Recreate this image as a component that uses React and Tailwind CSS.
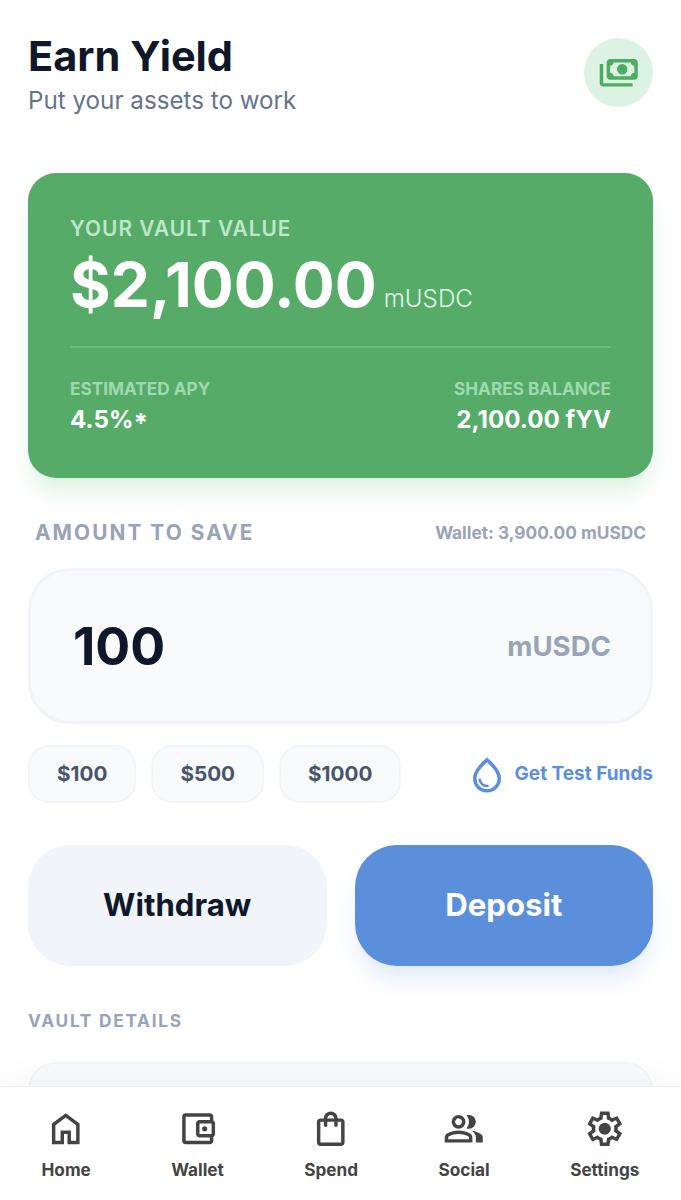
import { useState } from "react";
import { MdOutlineAccountBalanceWallet, MdOutlineShoppingBag } from "react-icons/md";

const Icon = ({ className, children }) => (
  <svg viewBox="0 0 24 24" fill="currentColor" className={className}>
    {children}
  </svg>
);

const PaymentsIcon = ({ className }) => (
  <Icon className={className}>
    <path d="M14 13q-1.25 0-2.125-.875T11 10t.875-2.125T14 7t2.125.875T17 10t-.875 2.125T14 13Zm-7 3q-.825 0-1.412-.587T5 14V6q0-.825.588-1.412T7 4h14q.825 0 1.413.588T23 6v8q0 .825-.587 1.413T21 16H7Zm2-2h10q0-.825.588-1.412T21 12V8q-.825 0-1.412-.587T19 6H9q0 .825-.587 1.413T7 8v4q.825 0 1.413.588T9 14Zm11 6H3q-.825 0-1.412-.587T1 18V7h2v11h17v2Z" />
  </Icon>
);

const DropIcon = ({ className }) => (
  <Icon className={className}>
    <path d="M12.275 19q.3-.025.513-.238T13 18.25q0-.35-.225-.562T12.2 17.5q-1.025.075-2.175-.562T8.575 14.625q-.05-.275-.262-.45T7.825 14q-.35 0-.575.263t-.15.612q.425 2.275 2 3.25t3.175.875ZM12 22q-3.425 0-5.713-2.35T4 13.8q0-2.5 1.988-5.437T12 2q4.025 3.425 6.012 6.363T20 13.8q0 3.5-2.288 5.85T12 22Zm0-2q2.6 0 4.3-1.762T18 13.8q0-1.825-1.513-4.125T12 4.65Q9.025 7.375 7.513 9.675T6 13.8q0 2.675 1.7 4.438T12 20Z" />
  </Icon>
);

const HomeIcon = ({ className }) => (
  <Icon className={className}>
    <path d="M6 19h3v-6h6v6h3v-9l-6-4.5L6 10v9Zm-2 2V9l8-6 8 6v12h-7v-6h-2v6H4Z" />
  </Icon>
);

const GroupIcon = ({ className }) => (
  <Icon className={className}>
    <path d="M1 20v-2.8q0-.85.438-1.563T2.6 14.55q1.55-.775 3.15-1.163T9 13t3.25.388 3.15 1.162q.725.375 1.163 1.088T17 17.2V20H1Zm18 0v-3q0-1.1-.613-2.113T16.65 13.15q1.275.15 2.4.513t2.1.887q.9.5 1.375 1.112T23 17v3h-4ZM9 12q-1.65 0-2.825-1.175T5 8t1.175-2.825T9 4t2.825 1.175T13 8t-1.175 2.825T9 12Zm10-4q0 1.65-1.175 2.825T15 12q-.275 0-.7-.062T13.6 11.8q.675-.8 1.038-1.775T15 8t-.363-2.025T13.6 4.2q.35-.125.7-.163T15 4q1.65 0 2.825 1.175T19 8ZM3 18h12v-.8q0-.275-.138-.5t-.362-.35q-1.35-.675-2.725-1.012T9 15t-2.775.338T3.5 16.35q-.225.125-.362.35T3 17.2v.8Zm6-8q.825 0 1.413-.587T11 8t-.587-1.412T9 6t-1.412.588T7 8t.588 1.413T9 10Z" />
  </Icon>
);

const SettingsIcon = ({ className }) => (
  <Icon className={className}>
    <path d="m9.25 22-.4-3.2q-.325-.125-.612-.3t-.563-.375L4.7 19.375l-2.75-4.75 2.575-1.95Q4.5 12.5 4.5 12.338v-.675q0-.163.025-.338L1.95 9.375l2.75-4.75 2.975 1.25q.275-.2.575-.375t.6-.3l.4-3.2h5.5l.4 3.2q.325.125.613.3t.562.375l2.975-1.25 2.75 4.75-2.575 1.95q.025.175.025.338v.674q0 .163-.05.338l2.575 1.95-2.75 4.75-2.95-1.25q-.275.2-.575.375t-.6.3l-.4 3.2h-5.5ZM11 20h1.975l.35-2.65q.775-.2 1.438-.587t1.212-.938l2.475 1.025.975-1.7-2.15-1.625q.125-.35.175-.737T17.5 12t-.05-.787-.175-.738l2.15-1.625-.975-1.7-2.475 1.05q-.55-.575-1.212-.962t-1.438-.588L13 4h-1.975l-.35 2.65q-.775.2-1.437.588t-1.213.937L5.55 7.15l-.975 1.7 2.15 1.6q-.125.375-.175.75t-.05.8q0 .4.05.775t.175.75l-2.15 1.625.975 1.7 2.475-1.05q.55.575 1.213.963t1.437.587L11 20Z" />
    <circle cx="12" cy="12" r="3.5" />
  </Icon>
);

const navItems = [
  { label: "Home", icon: HomeIcon },
  { label: "Wallet", icon: MdOutlineAccountBalanceWallet },
  { label: "Spend", icon: MdOutlineShoppingBag },
  { label: "Social", icon: GroupIcon },
  { label: "Settings", icon: SettingsIcon },
];

export default function App() {
  const [amount, setAmount] = useState("100");

  return (
    <div className="flex h-[1200px] w-full flex-col overflow-hidden bg-white font-['Inter',sans-serif] text-[#0f172a]">
      <main className="min-h-0 flex-1 overflow-hidden px-7 pt-7">
        {/* Header */}
        <header className="flex items-center justify-between">
          <div>
            <h1 className="text-[41.5px] leading-14 font-bold">Earn Yield</h1>
            <p className="text-[24.2px] leading-[33px] text-[#64748b]">Put your assets to work</p>
          </div>
          <div className="flex size-[69px] items-center justify-center rounded-full bg-[#dcf3e3] text-[#4dab62]">
            <PaymentsIcon className="size-[41.5px]" />
          </div>
        </header>

        {/* Vault value */}
        <section className="mt-14 h-[305px] rounded-[28px] bg-[#57ab68] px-[42px] pt-[42px] text-white shadow-[0_17px_26px_-5px_#dcefe2,0_7px_10px_-7px_#dcefe2]">
          <p className="text-[20.8px] leading-7 font-semibold tracking-[0.05em] text-[#bce8c8]">YOUR VAULT VALUE</p>
          <p className="mt-1.5 flex h-[70px] items-baseline gap-[7px] leading-[71px]">
            <span className="text-[62.2px] font-bold">$2,100.00</span>
            <span className="text-[24.2px] font-light text-[#dcfce7]">mUSDC</span>
          </p>
          <div className="mt-[27px] flex justify-between border-t-2 border-[#6cbb7d] pt-7">
            <div>
              <p className="text-[17.2px] leading-[26px] font-bold text-[#9bdbad]">ESTIMATED APY</p>
              <p className="text-[24.2px] leading-[35px] font-bold">
                4.5%<span className="relative top-1 text-[26px] leading-none">*</span>
              </p>
            </div>
            <div className="text-right">
              <p className="text-[17.2px] leading-[26px] font-bold text-[#9bdbad]">SHARES BALANCE</p>
              <p className="text-[24.2px] leading-[35px] font-bold">2,100.00 fYV</p>
            </div>
          </div>
        </section>

        {/* Amount */}
        <div className="mt-[41px] flex items-center justify-between px-[7px] font-bold text-[#98a3b7]">
          <label htmlFor="amount" className="text-[20.8px] leading-7 tracking-[0.1em]">AMOUNT TO SAVE</label>
          <span className="text-[17.3px] leading-7">Wallet: 3,900.00 mUSDC</span>
        </div>
        <div className="mt-[21px] flex h-[156px] items-center justify-between rounded-[42px] border-[3px] border-[#f1f5f9] bg-[#f8fafc] pt-0.5 pr-[39px] pl-[42px]">
          <input
            id="amount"
            value={amount}
            onChange={(e) => setAmount(e.target.value)}
            className="w-64 bg-transparent text-[51.8px] font-bold outline-none"
          />
          <span className="text-[27.6px] font-bold text-[#98a3b7]">mUSDC</span>
        </div>

        <div className="mt-[21px] flex h-[58px] items-center justify-between">
          <div className="flex gap-[15px]">
            {["100", "500", "1000"].map((value) => (
              <button
                key={value}
                onClick={() => setAmount(value)}
                className="h-[58px] rounded-[21px] border-2 border-[#f1f5f9] bg-[#f8fafc] px-[27px] text-[20.7px] font-bold text-[#475569]"
              >
                ${value}
              </button>
            ))}
          </div>
          <button className="flex items-center gap-[7px] pt-px text-[19px] font-bold text-[#5b8fdb]">
            <DropIcon className="size-[42px]" />
            Get Test Funds
          </button>
        </div>

        <div className="mt-[42px] grid grid-cols-2 gap-7 text-[31.2px] font-bold">
          <button className="h-[121px] rounded-[42px] bg-[#f1f5f9]">Withdraw</button>
          <button className="h-[121px] rounded-[42px] bg-[#5b8fdb] text-white shadow-[0_17px_26px_-5px_#e0eafb,0_7px_10px_-7px_#e0eafb]">Deposit</button>
        </div>

        {/* Vault details */}
        <h2 className="mt-[42px] text-[17.3px] leading-[26px] font-bold tracking-[0.1em] text-[#98a3b7]">VAULT DETAILS</h2>
        <div className="mt-7 h-80 rounded-[28px] border-2 border-[#f1f5f9] bg-[#f8fafc]" />
      </main>

      <nav className="relative flex h-[114px] justify-between border-t border-[#eeeff1] bg-white px-[41.5px] pt-[21px] text-[#444444] shadow-[0_-7px_35px_rgba(0,0,0,0.03)]">
        {navItems.map(({ label, icon: NavIcon }) => (
          <button key={label} className="flex flex-col items-center gap-[7px] text-[17.2px] leading-[26px] font-bold">
            <NavIcon className="size-[41.5px]" />
            {label}
          </button>
        ))}
      </nav>
    </div>
  );
}
